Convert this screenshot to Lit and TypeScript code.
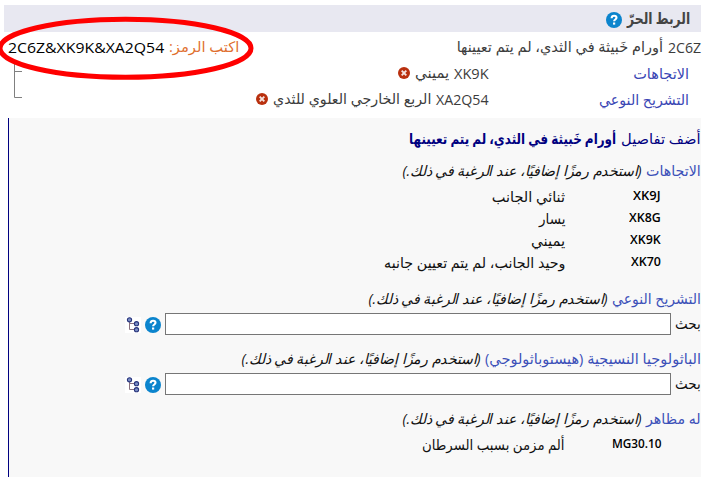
import { LitElement, html, css, svg } from "lit";
import { customElement, property } from "lit/decorators.js";

/* A single-line run of text condensed or widened to a set width. */
@customElement("fit-text")
class FitText extends LitElement {
  @property({ type: Number }) w = 0;
  static styles = css`
    :host { display: inline-block; flex: none; white-space: nowrap; direction: rtl; text-align: right; }
    .run { display: inline-block; transform-origin: 100% 50%; }
  `;
  render() {
    return html`<span class="run"><slot></slot></span>`;
  }
  firstUpdated() {
    this.style.width = `${this.w}px`;
    const run = this.renderRoot.querySelector<HTMLElement>(".run")!;
    run.style.transform = `scaleX(${this.w / run.offsetWidth})`;
  }
}

const help = html`<svg class="help" width="16" height="16" viewBox="0 0 16 16">
  <circle cx="8" cy="8" r="8" fill="#0b84cd" />
  <path d="M5.6 6.2C5.7 4.5 6.8 3.8 8.1 3.8C9.5 3.8 10.5 4.6 10.5 5.8C10.5 7.5 8.1 7.5 8.1 9.3" fill="none" stroke="#fff" stroke-width="2.1" />
  <rect x="7" y="10.5" width="2.2" height="2.1" fill="#fff" />
</svg>`;

const remove = html`<svg class="remove" width="12" height="12" viewBox="0 0 12 12">
  <circle cx="6" cy="6" r="6" fill="#b9300e" />
  <path d="M3.7 3.7L8.3 8.3M8.3 3.7L3.7 8.3" stroke="#f4e4e0" stroke-width="1.9" />
</svg>`;

const node = (x: number, y: number) => svg`
  <circle cx=${x} cy=${y} r="2.1" fill="#7c8fc4" stroke="#29357c" stroke-width="1.1" />`;
const tree = html`<svg class="tree" width="16" height="16" viewBox="0 0 16 16">
  <rect width="16" height="16" fill="#fff" />
  <path d="M4.5 3V12.5H10M4.5 6.5H10" fill="none" stroke="#89707f" stroke-width="1" />
  ${node(4.5, 2.8)}${node(11.5, 6.7)}${node(11.5, 12.7)}
</svg>`;

const note = html`<fit-text class="note" w="239.5">(استخدم رمزًا إضافيًا، عند الرغبة في ذلك.)</fit-text>`;

const sides = [
  { code: "XK9J", cw: 28, name: "ثنائي الجانب", nw: 73 },
  { code: "XK8G", cw: 32, name: "يسار", nw: 26 },
  { code: "XK9K", cw: 31, name: "يميني", nw: 34 },
  { code: "XK70", cw: 30, name: "وحيد الجانب، لم يتم تعيين جانبه", nw: 181 },
];

@customElement("app-root")
class AppRoot extends LitElement {
  static styles = css`
    :host {
      display: block; position: relative; width: 706px; height: 482px; overflow: hidden;
      box-sizing: border-box; padding: 5px 5px 0 4px; background: #fff; direction: rtl;
      font: 15px/20px "Open Sans", "Noto Sans", "DejaVu Sans", sans-serif; color: #3c3c3c;
    }
    svg { display: block; flex: none; }
    fit-text { font-size: 14.5px; }
    .lat { font-size: 15px; }
    .bar { display: flex; align-items: center; gap: 5px; height: 27px; padding: 0 11px 0 0; box-sizing: border-box; background: #e8e8f1; color: #444; }
    .bar fit-text { font-weight: 600; font-size: 15.5px; margin-top: -2px; }
    .bar svg { margin-top: 2px; }
    .row { display: flex; align-items: center; gap: 5px; height: 26px; }
    .main { height: 28px; margin-top: 1px; justify-content: space-between; padding-left: 4px; }
    .group { display: flex; align-items: center; gap: 5px; }
    .orange { color: #df6f30; }
    .black { color: #000; }
    .axis { padding-right: 12px; gap: 0; position: relative; top: -1px; }
    .label { width: 200px; color: #3a46b4; }
    .remove { margin-top: -1px; }
    .panel { height: 359px; margin: 5px 0 0 4px; box-sizing: border-box; border-left: 1px solid #000080; background: #f8f8f8; color: #111; padding-top: 10px; }
    .title { height: 22px; color: #000080; }
    .title .strong { font-weight: 700; }
    .head { height: 22px; }
    .head .cat { color: #3c50b8; }
    .note { font-style: italic; }
    .first { margin-top: 10px; }
    .list { margin: 4px 0 14px; }
    .item { display: flex; height: 22px; align-items: center; padding-right: 40px; }
    .code { width: 96px; display: flex; margin-top: -2px; }
    .code fit-text { font-size: 12px; font-weight: 600; color: #000; }
    .search { display: flex; align-items: center; gap: 4px; height: 22px; margin: 3px 0 13px; }
    .box { width: 506px; height: 22px; box-sizing: border-box; border: 1px solid #767676; background: #fff; outline: none; padding: 0; margin: 0; flex: none; border-radius: 0; }
    .tree { margin-top: 2px; }
    .search .help { margin-top: 2px; }
    .over { position: absolute; left: 0; top: 0; }
  `;

  private search() {
    return html`<div class="search"><fit-text w="26">بحث</fit-text><input class="box" type="text" />${help}${tree}</div>`;
  }
  private head(text: string, w: number) {
    return html`<div class="row head"><fit-text class="cat" w=${w}>${text}</fit-text>${note}</div>`;
  }
  private item(code: string, cw: number, name: string, nw: number) {
    return html`<div class="item"><div class="code"><fit-text w=${cw}>${code}</fit-text></div><fit-text w=${nw}>${name}</fit-text></div>`;
  }

  render() {
    return html`
      <div class="bar"><fit-text w="63">الربط الحرّ</fit-text>${help}</div>
      <div class="row main">
        <div class="group"><fit-text class="lat" w="33">2C6Z</fit-text><fit-text w="206">أورام خَبيثة في الثدي، لم يتم تعيينها</fit-text></div>
        <div class="group"><fit-text class="orange" w="70">اكتب الرمز:</fit-text><fit-text class="lat black" w="156">2C6Z&amp;XK9K&amp;XA2Q54</fit-text></div>
      </div>
      <div class="row axis">
        <div class="label"><fit-text w="56">الاتجاهات</fit-text></div>
        <div class="group"><fit-text class="lat" w="35">XK9K</fit-text><fit-text w="34">يميني</fit-text>${remove}</div>
      </div>
      <div class="row axis">
        <div class="label"><fit-text w="90">التشريح النوعي</fit-text></div>
        <div class="group"><fit-text class="lat" w="53">XA2Q54</fit-text><fit-text w="158">الربع الخارجي العلوي للثدي</fit-text>${remove}</div>
      </div>
      <div class="panel">
        <div class="row title"><fit-text w="80">أضف تفاصيل</fit-text><fit-text class="strong" w="207">أورام خَبيثة في الثدي، لم يتم تعيينها</fit-text></div>
        <div class="first">${this.head("الاتجاهات", 55)}</div>
        <div class="list">${sides.map((s) => this.item(s.code, s.cw, s.name, s.nw))}</div>
        ${this.head("التشريح النوعي", 89)}
        ${this.search()}
        ${this.head("الباثولوجيا النسيجية (هيستوباثولوجي)", 216)}
        ${this.search()}
        ${this.head("له مظاهر", 55)}
        <div class="list">${this.item("MG30.10", 50, "ألم مزمن بسبب السرطان", 143)}</div>
      </div>
      <svg class="over" width="260" height="110" viewBox="0 0 260 110">
        <path d="M14.5 62V97.5H22M14.5 71.5H22" fill="none" stroke="#808080" />
        <ellipse cx="125.5" cy="48.3" rx="125.5" ry="29" fill="none" stroke="#f00" stroke-width="5" />
      </svg>
    `;
  }
}
